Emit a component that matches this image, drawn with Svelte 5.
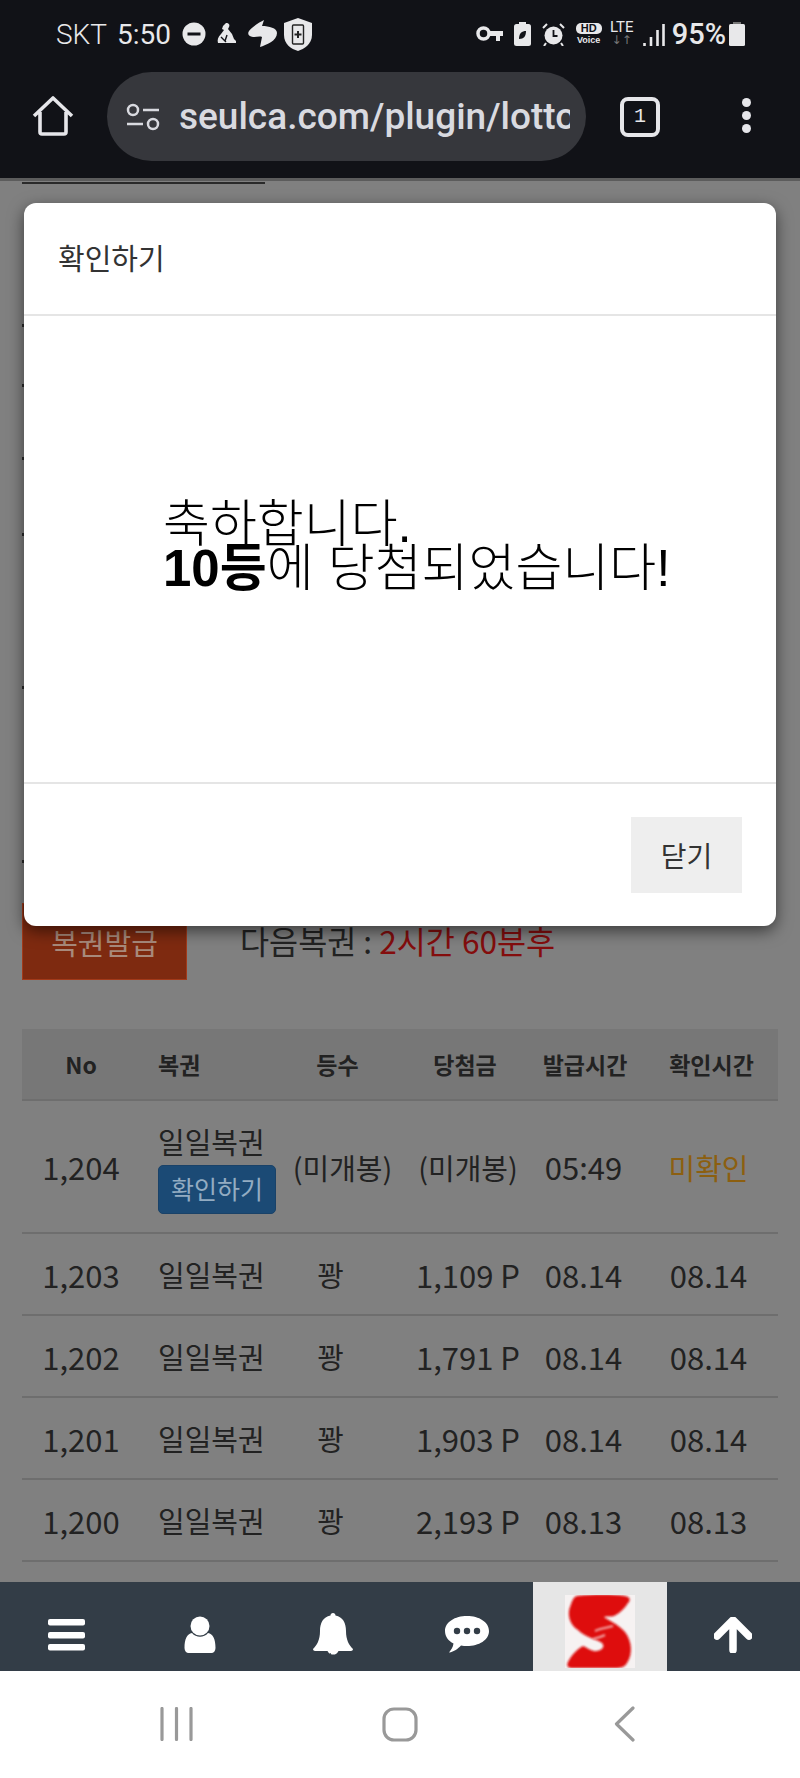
<script>
  const rows = [
    { no: '1,204', prize: '(미개봉)', pay: '(미개봉)', issued: '05:49', checked: '미확인', open: true },
    { no: '1,203', prize: '꽝', pay: '1,109 P', issued: '08.14', checked: '08.14' },
    { no: '1,202', prize: '꽝', pay: '1,791 P', issued: '08.14', checked: '08.14' },
    { no: '1,201', prize: '꽝', pay: '1,903 P', issued: '08.14', checked: '08.14' },
    { no: '1,200', prize: '꽝', pay: '2,193 P', issued: '08.13', checked: '08.13' }
  ]
  // bits of the page list that stick out beside the modal
  const peeks = [140, 57, 70, 73, 150, 171]
</script>

<div class="phone">
  <header class="chrome">
    <div class="status">
      <span class="carrier">SKT</span>
      <span class="clock">5:50</span>
      <svg class="ic" width="24" height="24" viewBox="0 0 24 24"><circle cx="12" cy="12" r="11.5" fill="#e8e8ea"/><rect x="5.5" y="10.5" width="13" height="3" fill="#111217"/></svg>
      <svg class="ic" width="20" height="24" viewBox="0 0 20 24"><path d="M9 1c3 0 4 2 3 4l-1 2 4 5 2 5 2 2v2H1c-1-3 0-6 3-9l3-4-2-1 1-3z" fill="#e8e8ea"/><path d="M4 15l5 5M10 13l-2 6" stroke="#111217" stroke-width="1.4" fill="none"/></svg>
      <svg class="ic swirl" width="29" height="28" viewBox="0 0 29 28"><path d="M16 0C12 2 5 6 1 11c-2 3 0 6 4 6 3 0 7-1 9 0l-2 10c6-2 17-6 17-14 0-5-8-7-15-7z" fill="#e8e8ea"/></svg>
      <svg class="ic" width="30" height="33" viewBox="0 0 30 33"><path d="M15 0l14 5v12c0 9-8 14-14 16C8 31 1 26 1 17V5z" fill="#e8e8ea"/><rect x="9.500" y="7" width="11" height="19" rx="1" fill="none" stroke="#222" stroke-width="1.400"/><path d="M15 13v7M11.500 16.500h7" stroke="#222" stroke-width="2"/></svg>
      <span class="spacer"></span>
      <svg class="ic" width="27" height="16" viewBox="0 0 27 16"><circle cx="7.500" cy="7.500" r="5.500" fill="none" stroke="#e8e8ea" stroke-width="3.500"/><path d="M13 5h14v5h-3v5h-4v-5h-7z" fill="#e8e8ea"/></svg>
      <svg class="ic" width="17" height="24" viewBox="0 0 17 24"><rect x="5" y="0" width="7" height="3" fill="#e8e8ea"/><rect x="0" y="2" width="17" height="22" rx="2.500" fill="#e8e8ea"/><path d="M5 17c0-6 3-8 7-8 0 5-2 8-7 8z" fill="#111217"/></svg>
      <svg class="ic" width="23" height="23" viewBox="0 0 23 23"><circle cx="11.500" cy="12.500" r="9" fill="#e8e8ea"/><path d="M11.500 7v6h4" stroke="#111217" stroke-width="1.800" fill="none"/><path d="M1 5l4-4M22 5l-4-4M4 20l-2 3M19 20l2 3" stroke="#e8e8ea" stroke-width="2"/></svg>
      <span class="hd"><b>HD</b><i>Voice</i></span>
      <span class="lte">LTE<i>↓↑</i></span>
      <svg class="ic signal" width="22" height="23" viewBox="0 0 22 23"><path d="M1.500 23v-3M8 23v-9M14.500 23V7M20.500 23V1" fill="none" stroke="#e8e8ea" stroke-width="2.600"/></svg>
      <span class="pct">95%</span>
      <svg class="ic batt" width="16" height="24" viewBox="0 0 16 24"><rect x="4" y="0" width="8" height="3" fill="#777"/><rect x="0" y="2" width="16" height="22" rx="1.500" fill="#e8e8ea"/></svg>
    </div>
    <div class="toolbar">
      <svg class="home" width="42" height="42" viewBox="0 0 42 42"><path d="M2 21L21 3l19 18M8 17v20a2 2 0 0 0 2 2h22a2 2 0 0 0 2-2V17" fill="none" stroke="#e6e6ea" stroke-width="3.600" stroke-linejoin="round"/></svg>
      <div class="omnibox">
        <svg width="34" height="28" viewBox="0 0 34 28"><circle cx="7" cy="7" r="5" fill="none" stroke="#d9dae0" stroke-width="2.500"/><circle cx="27" cy="21" r="5" fill="none" stroke="#d9dae0" stroke-width="2.500"/><path d="M17 7h16M1 21h16" stroke="#d9dae0" stroke-width="2.500"/></svg>
        <span class="url">seulca.com/plugin/lotto</span>
      </div>
      <span class="tabs">1</span>
      <span class="dots"><i></i><i></i><i></i></span>
    </div>
  </header>

  <main class="page">
    <div class="topline"></div>
    <div class="peeks">
      {#each peeks as gap}
        <div class="peek" style="margin-top: {gap}px"></div>
      {/each}
    </div>
    <div class="issue">
      <button class="issue-btn">복권발급</button>
      <span class="next">다음복권 : <em>2시간 60분후</em></span>
    </div>
    <table>
      <colgroup>
        <col style="width: 118px" /><col style="width: 130px" /><col style="width: 135px" />
        <col style="width: 120px" /><col style="width: 120px" /><col style="width: 133px" />
      </colgroup>
      <thead>
        <tr>
          <th>No</th>
          <th class="left">복권</th>
          <th>등수</th>
          <th>당첨금</th>
          <th>발급시간</th>
          <th>확인시간</th>
        </tr>
      </thead>
      <tbody>
        {#each rows as r}
          <tr class:open={r.open}>
            <td class="num">{r.no}</td>
            <td class="left">
              <div>일일복권</div>
              {#if r.open}<span class="badge">확인하기</span>{/if}
            </td>
            <td class={r.open ? 'sealed' : 'lost'}>{r.prize}</td>
            <td class="pay" class:num={!r.open}>{r.pay}</td>
            <td class="time num">{r.issued}</td>
            <td class="time last" class:num={!r.open} class:unseen={r.open}>{r.checked}</td>
          </tr>
        {/each}
      </tbody>
    </table>

    <div class="modal">
      <div class="modal-head">확인하기</div>
      <div class="modal-body">
        <p>축하합니다.<br /><strong>10등</strong>에 당첨되었습니다!</p>
      </div>
      <div class="modal-foot"><button class="close">닫기</button></div>
    </div>
  </main>

  <nav class="bottom">
    <a href="#menu" class="cell">
      <svg width="38" height="32" viewBox="0 0 38 32"><rect x="0" y="0" width="37" height="6.500" rx="2" fill="#fff"/><rect x="0" y="13" width="37" height="6.500" rx="2" fill="#fff"/><rect x="0" y="25" width="37" height="6.500" rx="2" fill="#fff"/></svg>
    </a>
    <a href="#me" class="cell">
      <svg width="32" height="38" viewBox="0 0 32 38"><circle cx="16" cy="10" r="9.500" fill="#fff"/><path d="M8 17c4 5 12 5 16 0 5 1 7.500 6 7.500 15 0 3-2 5-4 5H4.500c-2 0-4-2-4-5C.5 23 3 18 8 17z" fill="#fff"/></svg>
    </a>
    <a href="#alarm" class="cell">
      <svg width="40" height="44" viewBox="0 0 40 44"><path d="M20 0c1.500 0 2.500 1 2.500 2.500C30 4 33 10 33 18c0 9 3 14 7 18 0 1-1 2-2 2H2c-1 0-2-1-2-2 4-4 7-9 7-18 0-8 3-14 10.500-15.500C17.500 1 18.500 0 20 0z" fill="#fff"/><path d="M14.500 38a6 6 0 0 0 11 0z" fill="#fff"/><path d="M17 40a3.500 3.500 0 0 0 3.500 3" fill="none" stroke="#333d47" stroke-width="1"/></svg>
    </a>
    <a href="#chat" class="cell">
      <svg width="44" height="37" viewBox="0 0 44 37"><path d="M22 0c12 0 22 6 22 15S34 30 22 30c-2 0-4 0-6-.5-3 3-7 6.500-12 7 2-2.500 4-5 4.500-9C3.500 25 0 20.500 0 15 0 6 10 0 22 0z" fill="#fff"/><circle cx="12" cy="15" r="3.200" fill="#333d47"/><circle cx="22" cy="15" r="3.200" fill="#333d47"/><circle cx="32" cy="15" r="3.200" fill="#333d47"/></svg>
    </a>
    <a href="#home" class="cell logo">
      <span class="logo-box">
        <svg width="70" height="73" viewBox="0 0 70 73"><defs><filter id="soft"><feGaussianBlur stdDeviation="1.200"/></filter></defs><path d="M12 1C28-1 48-1 60 1c5 1 6 4 3 7-3 5-8 10-14 13-4 1-8 0-10 1 4 3 14 7 21 15 7 9 8 22 2 31-2 4-6 5-12 5H8c-5 0-7-2-5-6 3-6 8-12 15-16 5 2 9 6 14 5 6-1 8-5 5-8-6-4-17-6-24-13C5 30 2 20 5 12c2-5 3-10 7-11z" fill="#de0e0e" filter="url(#soft)"/><path d="M30 36c6-3 12-3 18-5M28 44c5-1 8-2 12-4" stroke="#f2a8a8" stroke-width="2" fill="none" filter="url(#soft)"/></svg>
      </span>
    </a>
    <a href="#top" class="cell">
      <svg width="38" height="36" viewBox="0 0 38 36"><path d="M19 3L3 19M19 3l16 16M19 5v28" fill="none" stroke="#fff" stroke-width="7.500" stroke-linecap="round" stroke-linejoin="round"/></svg>
    </a>
  </nav>

  <footer class="softkeys">
    <span class="key"><svg width="33" height="34" viewBox="0 0 33 34"><path d="M2 1.500v31M16.500 1.500v31M31 1.500v31" stroke="#999" stroke-width="3.200" stroke-linecap="round"/></svg></span>
    <span class="key"><svg width="36" height="35" viewBox="0 0 36 35"><rect x="2" y="2" width="32" height="31" rx="10" fill="none" stroke="#999" stroke-width="3.200"/></svg></span>
    <span class="key"><svg width="21" height="36" viewBox="0 0 21 36"><path d="M19 2L2.500 18 19 34" fill="none" stroke="#999" stroke-width="3.200" stroke-linecap="round" stroke-linejoin="round"/></svg></span>
  </footer>
</div>

<style>
  :global(body) {
    margin: 0;
    background: #fff;
  }
  .phone {
    width: 800px;
    height: 1778px;
    display: flex;
    flex-direction: column;
    overflow: hidden;
    font-family: "Noto Sans CJK KR", "Noto Sans", sans-serif;
  }

  .chrome {
    height: 178px;
    flex: none;
    background: #111217;
    color: #e8e8ea;
    font-family: Roboto, "Noto Sans", sans-serif;
  }
  .status {
    height: 68px;
    display: flex;
    align-items: center;
    padding: 0 55px 0 56px;
  }
  .carrier {
    font-size: 28px;
    font-weight: 300;
    width: 61px;
  }
  .clock {
    font-size: 28px;
    width: 65px;
  }
  .ic {
    flex: none;
    margin-right: 11px;
  }
  .swirl {
    margin-right: 6px;
  }
  .signal {
    margin-right: 7px;
  }
  .spacer {
    flex: 1;
  }
  .hd {
    width: 26px;
    margin-right: 8px;
    display: flex;
    flex-direction: column;
    align-items: center;
    font-family: "Liberation Sans", sans-serif;
    line-height: 1;
  }
  .hd b {
    background: #e8e8ea;
    color: #111217;
    font-size: 11px;
    padding: 0 5px;
    border-radius: 5px;
  }
  .hd i {
    font-style: normal;
    font-size: 9px;
    font-weight: 700;
    margin-top: 2px;
  }
  .lte {
    width: 24px;
    margin-right: 9px;
    display: flex;
    flex-direction: column;
    align-items: center;
    font-size: 15px;
    line-height: 13px;
  }
  .lte i {
    font-style: normal;
    color: #777;
    font-family: "DejaVu Sans", sans-serif;
    font-size: 12px;
  }
  .pct {
    font-size: 29px;
    font-weight: 500;
    margin-right: 3px;
  }
  .batt {
    margin-right: 0;
  }
  .toolbar {
    height: 110px;
    display: flex;
    align-items: flex-start;
    padding-left: 32px;
  }
  .home {
    flex: none;
    margin-top: 27px;
  }
  .omnibox {
    width: 479px;
    height: 89px;
    margin: 4px 0 0 33px;
    padding-left: 19px;
    box-sizing: border-box;
    border-radius: 45px;
    background: #36373c;
    display: flex;
    align-items: center;
    gap: 19px;
    overflow: hidden;
  }
  .omnibox svg {
    flex: none;
  }
  .url {
    font-size: 37px;
    font-weight: 500;
    color: #d9dae0;
    white-space: nowrap;
    width: 391px;
    overflow: hidden;
  }
  .tabs {
    width: 40px;
    height: 40px;
    margin: 29px 0 0 34px;
    box-sizing: border-box;
    border: 4px solid #e6e6ea;
    border-radius: 8px;
    font: 20px/32px "Liberation Mono", monospace;
    text-align: center;
  }
  .dots {
    margin: 30px 0 0 82px;
    display: flex;
    flex-direction: column;
    gap: 4px;
  }
  .dots i {
    width: 9px;
    height: 9px;
    border-radius: 50%;
    background: #e6e6ea;
  }

  .page {
    flex: none;
    height: 1404px;
    position: relative;
    overflow: hidden;
    background: #808080;
    padding: 0 22px;
    border-top: 3px solid #5c5c5c;
    box-sizing: border-box;
    color: #222;
  }
  .topline {
    width: 243px;
    height: 2px;
    margin-top: 1px;
    background: #2a2a2a;
  }
  .peeks {
    display: flow-root;
    height: 719px;
  }
  .peek {
    width: 2px;
    height: 3px;
    background: #2a2a2a;
  }
  .issue {
    display: flex;
    align-items: center;
    gap: 53px;
  }
  .issue-btn {
    width: 165px;
    height: 77px;
    border: 1px solid #a23a1a;
    background: #7e2a10;
    color: #a88a7c;
    font: inherit;
    font-size: 29px;
    padding: 0;
  }
  .next {
    font-size: 31.6px;
    margin-top: -3px;
  }
  .next em {
    font-style: normal;
    color: #840d0d;
  }
  table {
    width: 756px;
    margin-top: 49px;
    table-layout: fixed;
    border-collapse: collapse;
  }
  th {
    height: 70px;
    background: #777;
    border-bottom: 2px solid #6e6e6e;
    font-size: 23px;
    font-weight: 700;
    padding: 0;
  }
  td {
    height: 80px;
    border-bottom: 2px solid #6e6e6e;
    font-size: 29px;
    text-align: center;
    padding: 0;
  }
  td.num {
    font-size: 31px;
  }
  tr.open td {
    height: 131px;
  }
  th.left,
  td.left {
    text-align: left;
    padding-left: 18px;
  }
  .badge {
    display: inline-block;
    width: 118px;
    height: 49px;
    margin-top: 3px;
    box-sizing: border-box;
    border-radius: 5px;
    border: 1px solid #1a4268;
    background: #1b4a75;
    color: #93acc2;
    font-size: 25px;
    line-height: 45px;
    text-align: center;
  }
  .sealed {
    padding-left: 10px;
  }
  .lost {
    padding-right: 14px;
  }
  .pay {
    padding-left: 6px;
  }
  .time {
    padding-right: 3px;
  }
  .last {
    padding-right: 6px;
  }
  .unseen {
    color: #8c5f10;
  }

  .modal {
    position: absolute;
    left: 24px;
    top: 22px;
    width: 752px;
    height: 723px;
    display: flex;
    flex-direction: column;
    background: #fff;
    border-radius: 12px;
    box-shadow: 0 5px 16px rgba(0, 0, 0, 0.55);
  }
  .modal-head {
    height: 113px;
    flex: none;
    padding-left: 34px;
    box-sizing: border-box;
    border-bottom: 2px solid #e5e5e5;
    font-size: 29px;
    line-height: 108px;
    color: #333;
  }
  .modal-body {
    flex: 1;
    display: flex;
    align-items: center;
    padding: 0 0 5px 139px;
  }
  .modal-body p {
    margin: 0;
    font-family: "Liberation Sans", "Noto Sans CJK KR", sans-serif;
    font-size: 51px;
    line-height: 44px;
    color: #000;
    font-weight: 300;
    white-space: nowrap;
  }
  .modal-body strong {
    font-weight: 700;
  }
  .modal-foot {
    height: 144px;
    flex: none;
    display: flex;
    justify-content: flex-end;
    padding: 33px 34px 0 0;
    box-sizing: border-box;
    border-top: 2px solid #e5e5e5;
  }
  .close {
    width: 111px;
    height: 76px;
    border: 0;
    background: #eee;
    color: #333;
    font: inherit;
    font-size: 28px;
    padding: 0;
  }

  .bottom {
    height: 89px;
    flex: none;
    display: grid;
    grid-template-columns: repeat(6, 1fr);
    background: #333d47;
  }
  .cell {
    display: flex;
    align-items: center;
    justify-content: center;
    padding-top: 16px;
  }
  .cell svg {
    display: block;
  }
  .logo {
    align-items: flex-start;
    padding-top: 13px;
    background: #e6e6e6;
  }
  .logo-box {
    width: 70px;
    height: 73px;
    background: #f6f2f2;
  }

  .softkeys {
    flex: none;
    height: 107px;
    background: #fff;
    display: grid;
    grid-template-columns: repeat(3, 224px);
    padding: 0 64px;
    align-items: center;
    justify-items: center;
  }
  .key {
    display: flex;
    margin-top: -1px;
  }
</style>
